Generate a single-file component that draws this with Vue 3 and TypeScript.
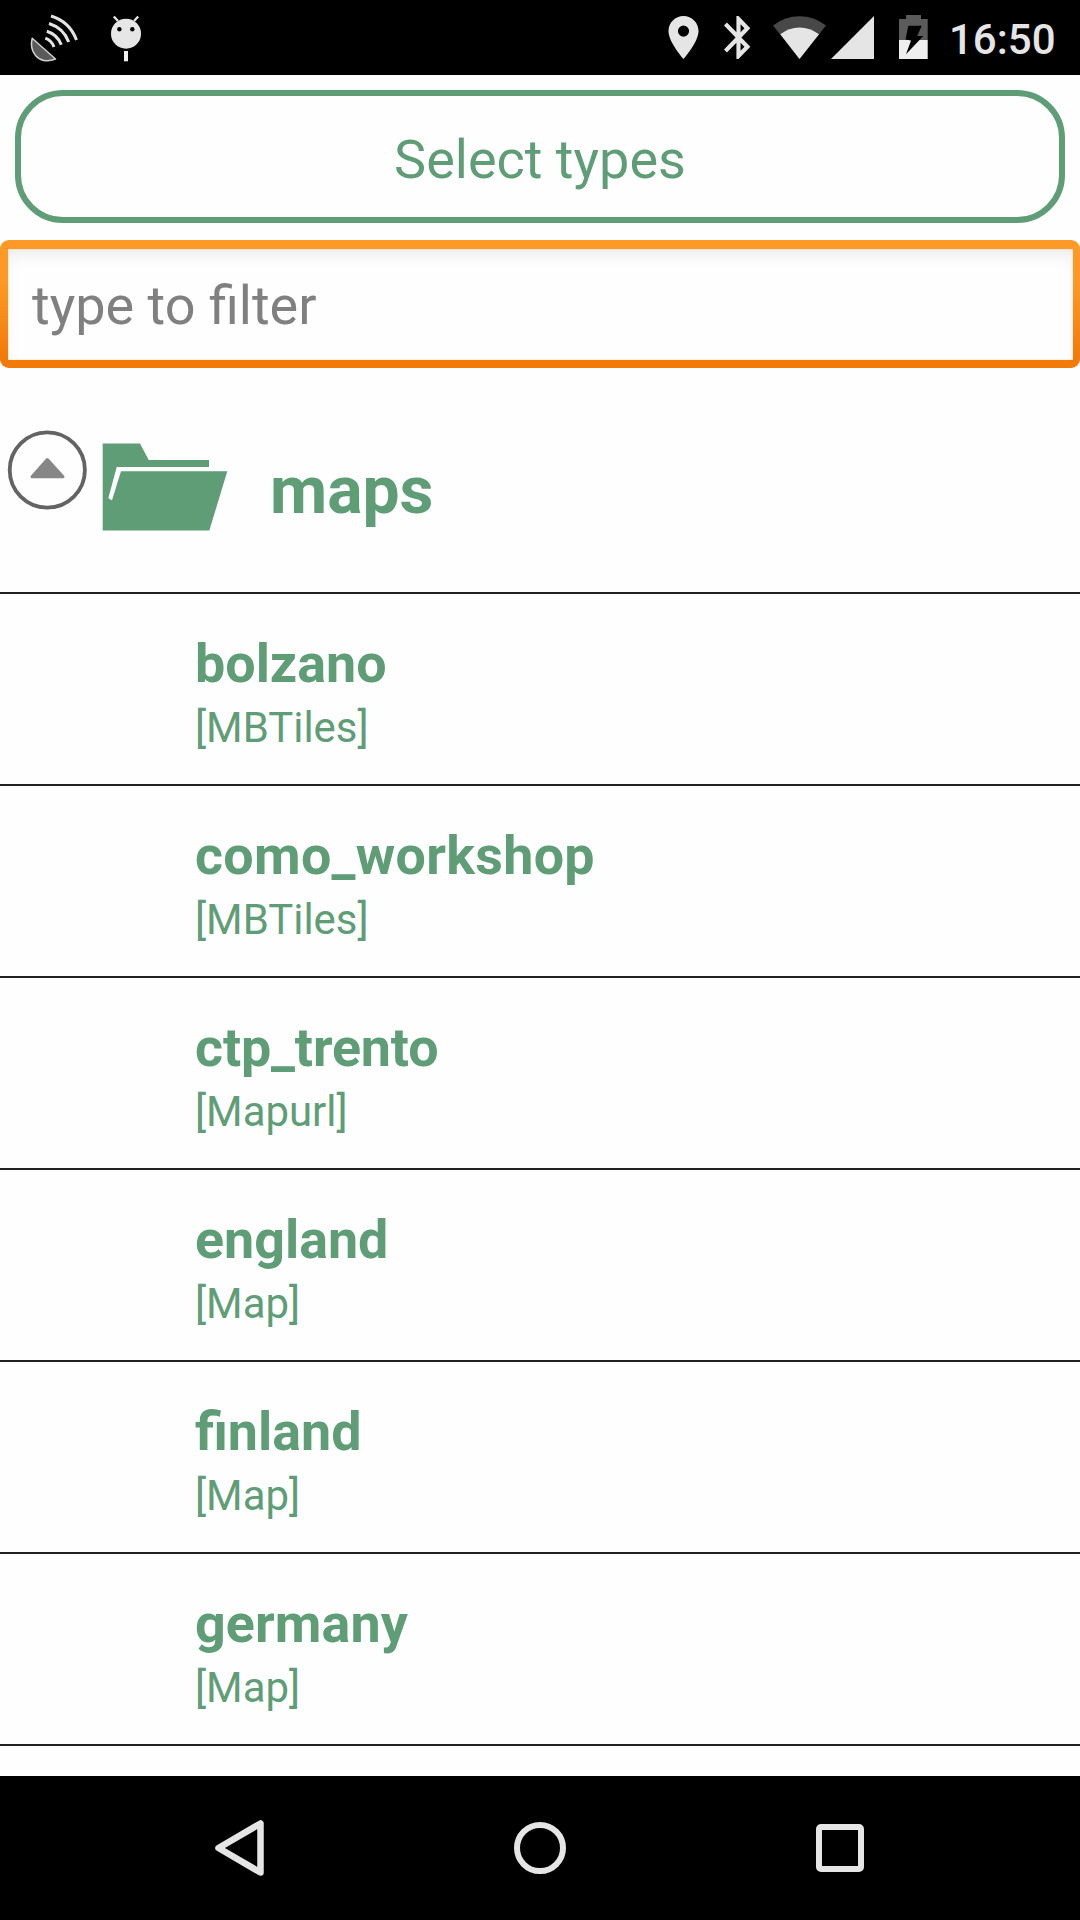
<script setup lang="ts">
interface MapSource {
  name: string
  kind: string
  tracking?: string
}

const folder = 'maps'
const clock = '16:50'
const sources: MapSource[] = [
  { name: 'bolzano', kind: 'MBTiles' },
  { name: 'como_workshop', kind: 'MBTiles', tracking: '0.3px' },
  { name: 'ctp_trento', kind: 'Mapurl', tracking: '-0.15px' },
  { name: 'england', kind: 'Map' },
  { name: 'finland', kind: 'Map' },
  { name: 'germany', kind: 'Map', tracking: '0.1px' },
]
</script>

<template>
  <div class="screen">
    <header class="status">
      <div class="group">
        <svg class="satellite" width="52" height="50" viewBox="28 13 52 50">
          <path d="M32.2 38.3 55.5 59C47 62.500 39.500 60.500 35.500 55.500 31.800 50.800 30.600 44.500 32.200 38.300Z" fill="#5a5a5a" stroke="#cfcfcf" stroke-width="1.500" stroke-linejoin="round" />
          <g fill="none" stroke="#e4e4e4" stroke-width="3">
            <path d="M45.300 38.200Q51.500 40.300 54 47" />
            <path d="M46.800 31.300Q57.300 34.500 61.300 44.800" />
            <path d="M49 23.500Q63.500 28 68.700 42" />
            <path d="M51 16Q69.500 21.500 76.500 40" />
          </g>
        </svg>
        <svg class="bug" width="34" height="50" viewBox="109 13 34 50">
          <circle cx="126" cy="33.700" r="15" fill="#e6e6e6" />
          <path d="M113.800 16.500 118 21M138.200 16.500 134 21" stroke="#e6e6e6" stroke-width="2.300" />
          <circle cx="119.400" cy="29.300" r="2.200" />
          <circle cx="132.300" cy="29.300" r="2.200" />
          <path d="M124 51h4v10.300h-4z" fill="#f0f0f0" />
        </svg>
      </div>
      <div class="group right">
        <svg width="32" height="50" viewBox="667 13 32 50">
          <path fill="#e5e5e5" fill-rule="evenodd" d="M683.500 16c-8.300 0-15 6.700-15 15 0 11.300 15 28 15 28s15-16.700 15-28c0-8.300-6.700-15-15-15zm0 9.500a5.600 5.600 0 1 1 0 11.200 5.600 5.600 0 0 1 0-11.200z" />
        </svg>
        <svg class="bluetooth" width="28" height="50" viewBox="723 13 28 50">
          <path transform="translate(713.650 11.700) scale(2.070 2.150)" fill="#e5e5e5" d="M17.710 7.710 12 2h-1v7.590L6.410 5 5 6.410 10.590 12 5 17.590 6.410 19 11 14.410V22h1l5.710-5.710-4.300-4.290zM13 5.830l1.880 1.880L13 9.590zm1.880 10.460L13 18.170v-3.760z" />
        </svg>
        <svg class="wifi" width="54" height="50" viewBox="772 13 54 50">
          <path fill="#484848" d="M773 25.500Q785 16.300 799.500 16.300T826 25.500L799.500 59Z" />
          <path fill="#e5e5e5" d="M780.300 34.300Q789 27.500 799.500 27.500T819 34.300L799.500 59Z" />
        </svg>
        <svg class="signal" width="44" height="50" viewBox="831 13 44 50">
          <path fill="#e5e5e5" d="M831 59 874 16V59Z" />
        </svg>
        <svg class="battery" width="30" height="50" viewBox="898 13 30 50">
          <path fill="#5b5b5b" d="M899 19h7v-4h15v4h6.700v21.500H899z" />
          <path fill="#efefef" d="M899 40h28.700v19H899z" />
          <path d="M908.300 25.700h13.400L917.300 36h6L906 54.300 911 40.500 905.500 39.500Z" />
        </svg>
        <span class="clock">{{ clock }}</span>
      </div>
    </header>

    <main class="content">
      <button class="select" type="button">Select types</button>
      <div class="filter">
        <div class="filter-inner">type to filter</div>
      </div>

      <div class="folder-row">
        <svg class="collapse" width="80" height="80" viewBox="7 430 80 80">
          <circle cx="47.300" cy="470" r="37.600" fill="none" stroke="#636363" stroke-width="3.800" />
          <path d="M47.300 459.500 32 476.800H63Z" fill="#868686" stroke="#868686" stroke-width="3" stroke-linejoin="round" />
        </svg>
        <svg class="folder" width="126" height="88" viewBox="102 443 126 88">
          <path fill="#5e9d76" d="M102.700 443.500H140L148.700 460H209V467H116.700L108.300 498.300 112 500.300 121 471.300H227.300L209.300 530.500H102.700Z" />
        </svg>
        <span class="folder-name">{{ folder }}</span>
      </div>

      <ul class="list">
        <li v-for="source in sources" :key="source.name" class="item">
          <div class="name" :style="{ letterSpacing: source.tracking }">{{ source.name }}</div>
          <div class="kind">[{{ source.kind }}]</div>
        </li>
      </ul>
    </main>

    <nav class="nav">
      <svg width="50" height="60" viewBox="214 1818 50 60">
        <path d="M218.500 1848 260.500 1823.500V1872.500Z" fill="none" stroke="#e5e5e5" stroke-width="6.500" stroke-linejoin="round" />
      </svg>
      <svg width="54" height="60" viewBox="513 1818 54 60">
        <circle cx="540" cy="1848" r="23" fill="none" stroke="#e5e5e5" stroke-width="6" />
      </svg>
      <svg width="50" height="60" viewBox="815 1818 50 60">
        <rect x="819" y="1827" width="42" height="42" rx="2" fill="none" stroke="#e5e5e5" stroke-width="6" />
      </svg>
    </nav>
  </div>
</template>

<style>
body {
  margin: 0;
}
</style>

<style scoped>
.screen {
  display: flex;
  flex-direction: column;
  width: 1080px;
  height: 1920px;
  overflow: hidden;
  background: #fefefe;
  color: #5e9d76;
  font-family: Roboto, sans-serif;
}

svg {
  display: block;
  flex: none;
}

.status {
  box-sizing: border-box;
  display: flex;
  flex: none;
  justify-content: space-between;
  height: 75px;
  padding: 13px 24px 0 28px;
  background: #000;
}

.group {
  display: flex;
}

.bug {
  margin-left: 29px;
}

.bluetooth {
  margin-left: 24px;
}

.wifi {
  margin-left: 21px;
}

.signal {
  margin-left: 5px;
}

.battery {
  margin-left: 23px;
}

.clock {
  width: 107px;
  margin-left: 21px;
  color: #e5e5e5;
  font-size: 42px;
  font-weight: 500;
  line-height: 54px;
  white-space: nowrap;
}

.content {
  display: flex;
  flex: 1;
  flex-direction: column;
  min-height: 0;
  overflow: hidden;
}

.select {
  box-sizing: border-box;
  flex: none;
  height: 133px;
  margin: 15px 15px 0;
  padding: 6px 0 0;
  border: 6px solid #5e9d76;
  border-radius: 48px;
  background: transparent;
  color: inherit;
  font-family: inherit;
  font-size: 54px;
}

.filter {
  box-sizing: border-box;
  flex: none;
  height: 128px;
  margin-top: 17px;
  padding: 8.5px 7.5px;
  border-radius: 9px;
  background: linear-gradient(#fd9a27 0%, #fd9a27 32%, #f27a08 92%);
}

.filter-inner {
  box-sizing: border-box;
  height: 111px;
  padding-left: 24.5px;
  background: #fefefe;
  box-shadow: inset 0 8px 16px -3px rgba(0, 0, 0, 0.08), inset 0 0 2px #fbd7ac;
  color: #808080;
  font-size: 54px;
  line-height: 114px;
}

.folder-row {
  box-sizing: border-box;
  display: flex;
  flex: none;
  align-items: flex-start;
  height: 226px;
  padding: 62px 0 0 7px;
  border-bottom: 2px solid #222;
}

.folder {
  margin: 13px 0 0 15px;
}

.folder-name {
  margin: 22px 0 0 42px;
  font-size: 66px;
  font-weight: 700;
  line-height: 77px;
}

.list {
  margin: 0;
  padding: 0;
  list-style: none;
}

.item {
  box-sizing: border-box;
  height: 192px;
  padding: 38px 0 0 195px;
  border-bottom: 2px solid #222;
}

.name {
  font-size: 53.8px;
  font-weight: 700;
  line-height: 63px;
}

.kind {
  margin-top: 8px;
  font-size: 41.9px;
  line-height: 49px;
}

.nav {
  box-sizing: border-box;
  display: flex;
  flex: none;
  justify-content: space-between;
  height: 144px;
  padding: 42px 215px 0 214px;
  background: #000;
}
</style>
